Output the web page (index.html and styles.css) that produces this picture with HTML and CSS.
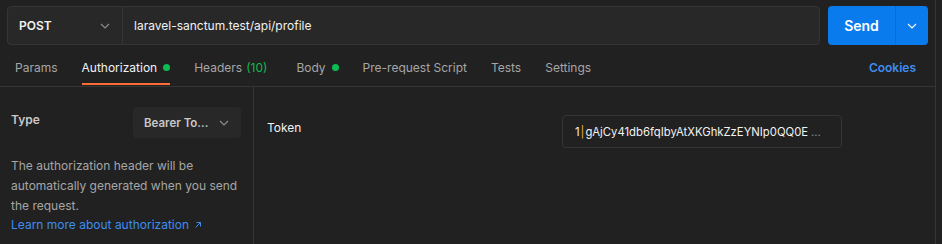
FILE: index.html
```html
<!DOCTYPE html>
<html lang="en">
<head>
    <meta charset="UTF-8">
    <title>Request - Authorization</title>
    <link rel="stylesheet" href="styles.css">
</head>
<body>
    <div class="app">
        <div class="request-bar">
            <div class="url-group">
                <div class="method">
                    <span>POST</span>
                    <svg class="chevron" width="10" height="6" viewBox="0 0 10 6"><polyline points="1,1 5,5 9,1" fill="none" stroke="#8f8f8f" stroke-width="1.1"/></svg>
                </div>
                <div class="url">laravel-sanctum.test/api/profile</div>
            </div>
            <div class="send">
                <span class="send-label">Send</span>
                <span class="send-more">
                    <svg width="10" height="6" viewBox="0 0 10 6"><polyline points="1,1 5,5 9,1" fill="none" stroke="#ffffff" stroke-width="1.1"/></svg>
                </span>
            </div>
        </div>

        <div class="tabs">
            <div class="tab">Params</div>
            <div class="tab active">Authorization <span class="dot"></span></div>
            <div class="tab tab-headers">Headers <span class="count">(10)</span></div>
            <div class="tab">Body <span class="dot"></span></div>
            <div class="tab">Pre-request Script</div>
            <div class="tab">Tests</div>
            <div class="tab">Settings</div>
            <div class="cookies">Cookies</div>
        </div>

        <div class="auth">
            <div class="auth-side">
                <div class="type-row">
                    <span class="type-label">Type</span>
                    <div class="select">
                        <span>Bearer To...</span>
                        <svg width="10" height="6" viewBox="0 0 10 6"><polyline points="1,1 5,5 9,1" fill="none" stroke="#8f8f8f" stroke-width="1.1"/></svg>
                    </div>
                </div>
                <p class="help">The authorization header will be automatically generated when you send the request.</p>
                <a class="learn" href="#">Learn more about authorization
                    <svg width="8" height="8" viewBox="0 0 8 8"><path d="M1.5 6.5 L6.5 1.5 M2.5 1.5 H6.5 V5.5" fill="none" stroke="#3e8ded" stroke-width="1"/></svg>
                </a>
            </div>
            <div class="auth-main">
                <div class="field-label">Token</div>
                <div class="token-input">
                    <span class="token-text">1<span class="caret">|</span>gAjCy41db6fqIbyAtXKGhkZzEYNIp0QQ0E</span>
                    <span class="more">...</span>
                </div>
            </div>
        </div>
    </div>
</body>
</html>
```

FILE: styles.css
```css
:root {
    --bg: #212121;
    --field: #282828;
    --line: #353535;
    --text: #f2f2f2;
    --muted: #a6a6a6;
    --blue: #097bed;
    --link: #3e8ded;
    --green: #0cbb52;
    --orange: #ff6c37;
}

* {
    box-sizing: border-box;
    margin: 0;
    padding: 0;
}

body {
    background-color: var(--bg);
    color: var(--text);
    font-family: Inter, "Noto Sans", sans-serif;
    font-size: 12px;
    overflow: hidden;
}

.app {
    width: 936px;
    height: 244px;
    border-right: 1px solid var(--line);
    display: flex;
    flex-direction: column;
}

/* URL bar */
.request-bar {
    display: flex;
    gap: 8px;
    padding: 6px 7px 0 7px;
    height: 45px;
}

.url-group {
    flex: 1;
    display: flex;
    background-color: var(--field);
    border: 1px solid var(--line);
    border-radius: 4px;
}

.method {
    width: 115px;
    display: flex;
    align-items: center;
    justify-content: space-between;
    padding: 0 12px 0 11px;
    border-right: 1px solid var(--line);
    font-weight: 600;
    font-size: 12px;
}

.url {
    display: flex;
    align-items: center;
    padding-left: 11px;
    font-size: 12px;
}

.send {
    width: 100px;
    display: flex;
    background-color: var(--blue);
    border-radius: 4px;
    color: #ffffff;
}

.send-label {
    flex: 1;
    display: flex;
    align-items: center;
    justify-content: center;
    font-size: 14px;
    font-weight: 600;
    border-right: 1px solid #0a6cd0;
}

.send-more {
    width: 32px;
    display: flex;
    align-items: center;
    justify-content: center;
}

/* Tabs */
.tabs {
    display: flex;
    align-items: stretch;
    height: 42px;
    padding: 0 15px;
    gap: 24px;
    border-bottom: 1px solid var(--line);
}

.tab {
    display: flex;
    align-items: center;
    gap: 6px;
    padding-top: 7px;
    color: var(--muted);
    border-bottom: 2px solid transparent;
    margin-bottom: 1px;
}

.tab.active {
    color: var(--text);
    border-bottom-color: var(--orange);
}

.tab-headers {
    margin-right: 5px;
}

.dot {
    width: 7px;
    height: 7px;
    border-radius: 50%;
    background-color: var(--green);
}

.count {
    color: var(--green);
    margin-left: -2px;
}

.cookies {
    margin-left: auto;
    display: flex;
    align-items: center;
    padding-top: 7px;
    padding-right: 4px;
    margin-bottom: 3px;
    color: var(--link);
    font-weight: 600;
}

/* Authorization body */
.auth {
    flex: 1;
    display: flex;
}

.auth-side {
    width: 254px;
    border-right: 1px solid var(--line);
    padding: 20px 12px 0 11px;
}

.type-row {
    display: flex;
    justify-content: space-between;
    align-items: flex-start;
}

.type-label {
    font-weight: 600;
    color: #c8c8c8;
    padding-top: 5px;
}

.select {
    width: 108px;
    height: 31px;
    display: flex;
    align-items: center;
    justify-content: space-between;
    padding: 0 12px 0 11px;
    background-color: var(--field);
    border-radius: 4px;
    color: #c8c8c8;
    font-weight: 600;
    font-size: 11.5px;
}

.help {
    margin-top: 18px;
    color: var(--muted);
    line-height: 20px;
}

.learn {
    display: inline-flex;
    align-items: center;
    gap: 5px;
    color: var(--link);
    text-decoration: none;
    line-height: 18px;
}

.auth-main {
    flex: 1;
    display: grid;
    grid-template-columns: 295px 280px;
    align-items: start;
    padding: 28px 0 0 13px;
}

.field-label {
    padding-top: 5px;
}

.token-input {
    height: 33px;
    display: flex;
    align-items: center;
    padding: 0 12px;
    border: 1px solid var(--line);
    border-radius: 4px;
    white-space: nowrap;
    font-size: 11.3px;
}

.token-text {
    overflow: hidden;
    min-width: 0;
}

.caret {
    color: #f2b233;
    margin: 0 1px;
}

.more {
    color: #8a8a8a;
    margin-left: 3px;
    flex-shrink: 0;
}
```
